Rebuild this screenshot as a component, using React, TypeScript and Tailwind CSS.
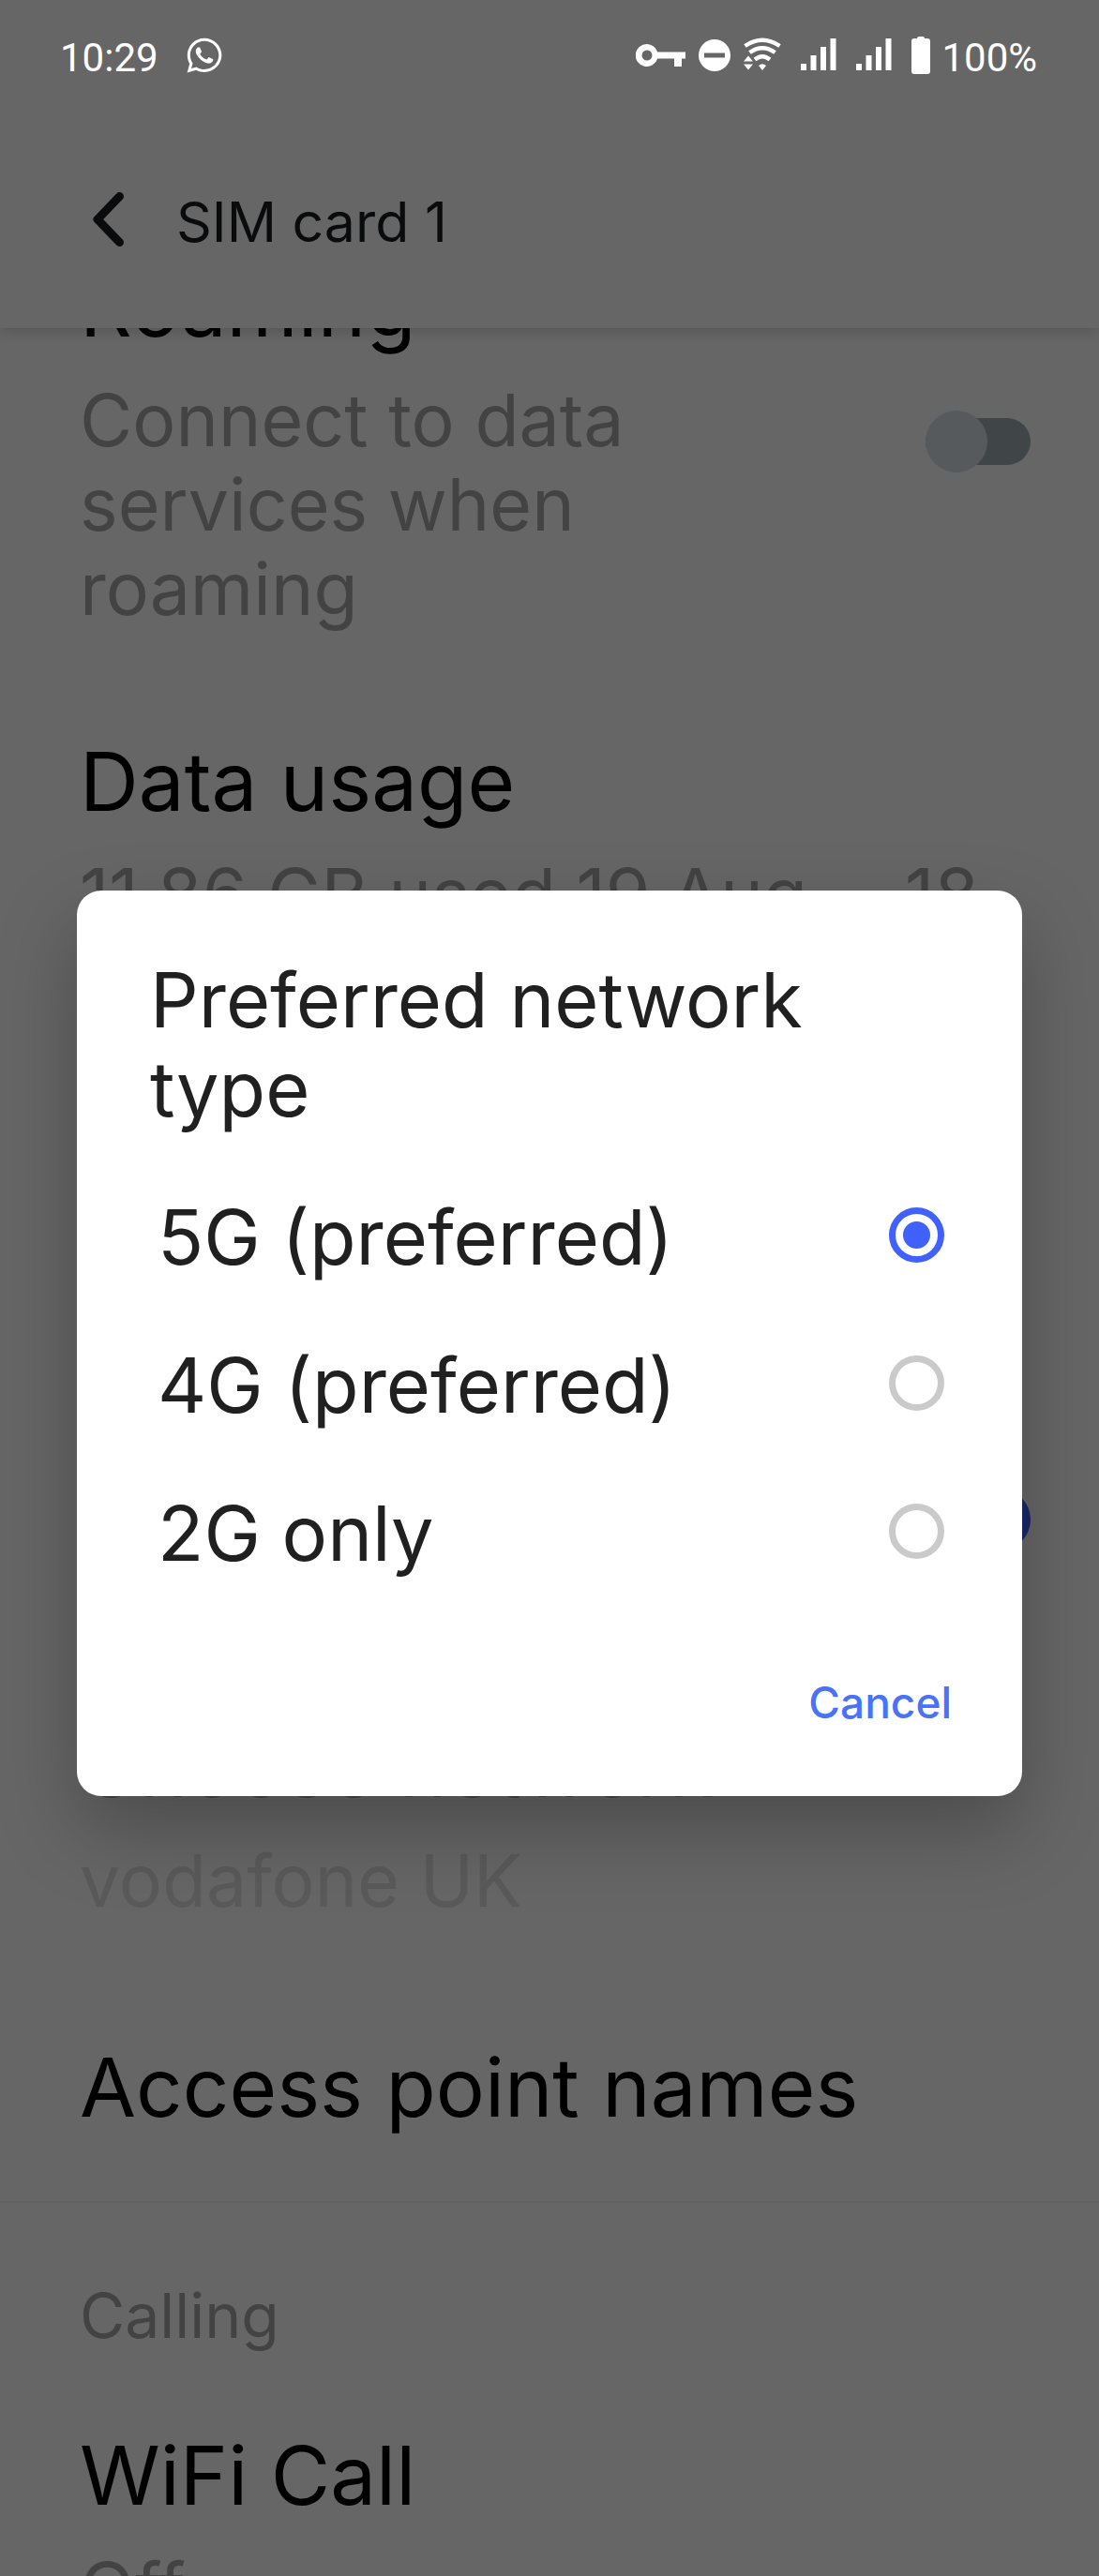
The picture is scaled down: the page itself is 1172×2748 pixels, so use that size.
import { useState } from "react";
import { FaWhatsapp } from "react-icons/fa";

const NETWORK_TYPES = ["5G (preferred)", "4G (preferred)", "2G only"];

function KeyIcon() {
  return (
    <svg width="53" height="40" viewBox="0 0 53 40" fill="currentColor" aria-hidden="true">
      <path
        fillRule="evenodd"
        d="M12 8a12 12 0 0 1 11.2 8.5H53v7h-4V32h-8v-8.500H23.200A12 12 0 1 1 12 8Zm0 6.500a5.500 5.500 0 1 0 0 11a5.500 5.500 0 1 0 0-11Z"
      />
    </svg>
  );
}

function DoNotDisturbIcon() {
  return (
    <svg width="34" height="40" viewBox="0 0 34 40" aria-hidden="true">
      <path fill="currentColor" fillRule="evenodd" d="M17 3a17 17 0 1 1 0 34a17 17 0 1 1 0-34ZM6 17.500v5h22v-5Z" />
    </svg>
  );
}

function WifiIcon() {
  return (
    <svg width="40" height="40" viewBox="0 0 40 40" fill="none" aria-hidden="true">
      <g stroke="currentColor" strokeWidth="4.500">
        <path d="M1.500 10Q20 -2.500 38.500 10" />
        <path d="M6.500 17Q20 7.500 33.500 17" />
        <path d="M12 24.500Q20 18 28 24.500" />
      </g>
      <path fill="currentColor" d="M16 31q4-3.500 8 0l-4 5ZM0 26.500l5-6 5 6ZM0 29.500h10l-5 6Z" />
    </svg>
  );
}

function SignalIcon() {
  return (
    <svg width="38" height="40" viewBox="0 0 38 40" fill="currentColor" aria-hidden="true">
      <path d="M0 29h6v7H0ZM10.500 20h6v16h-6ZM21 11h6v25h-6ZM31.500 2h6v34h-6Z" />
    </svg>
  );
}

function BatteryIcon() {
  return (
    <svg width="20" height="40" viewBox="0 0 20 40" fill="currentColor" aria-hidden="true">
      <path d="M8 0h4q2 0 2 2h3q3 0 3 3v32q0 3-3 3H3q-3 0-3-3V5q0-3 3-3h3q0-2 2-2Z" />
    </svg>
  );
}

function Switch({ label, checked, onChange }: { label: string; checked: boolean; onChange: (v: boolean) => void }) {
  return (
    <label className="flex shrink-0 items-center pb-2">
      <input
        type="checkbox"
        role="switch"
        aria-label={label}
        className="peer sr-only"
        checked={checked}
        onChange={(e) => onChange(e.target.checked)}
      />
      <span className="flex h-[50px] w-28 items-center rounded-full bg-[#a0adb2] peer-checked:justify-end peer-checked:bg-[#b3c0ff] peer-checked:[&>span]:bg-[#4161ff]">
        <span className="size-[66px] shrink-0 rounded-full bg-[#d8e2e8]" />
      </span>
    </label>
  );
}

function ItemText({ title, summary, disabled }: { title: string; summary?: string; disabled?: boolean }) {
  return (
    <div className="flex flex-1 flex-col gap-6">
      <p className={disabled ? "text-[87px] leading-[102px] text-[#b0b0b0]" : "text-[87px] leading-[102px] text-black"}>
        {title}
      </p>
      {summary && (
        <p className={disabled ? "text-[77px] leading-[90px] text-[#e0e0e0]" : "text-[77px] leading-[90px] text-[#a8a8a8]"}>
          {summary}
        </p>
      )}
    </div>
  );
}

export default function App() {
  const [networkType, setNetworkType] = useState("5G (preferred)");
  const [roaming, setRoaming] = useState(false);
  const [autoSelect, setAutoSelect] = useState(true);
  const [open, setOpen] = useState(true);

  return (
    <div className="relative h-screen overflow-hidden bg-white font-['Inter',sans-serif]">
      {/* Status bar stays above the dim layer */}
      <div className="absolute inset-x-0 top-0 z-30 flex h-[118px] items-center justify-between pr-[66px] pl-16 font-['Roboto',sans-serif] text-[42px] text-white">
        <div className="flex items-center gap-7">
          <time className="pt-1">10:29</time>
          <FaWhatsapp className="size-[42px]" />
        </div>
        <div className="flex items-center">
          <div className="mr-3 flex items-center gap-[21px]">
            <div className="flex items-center gap-[14px]">
              <KeyIcon />
              <DoNotDisturbIcon />
              <WifiIcon />
            </div>
            <SignalIcon />
            <SignalIcon />
            <BatteryIcon />
          </div>
          <span className="pt-1">100%</span>
        </div>
      </div>

      <header className="relative z-10 flex h-[350px] items-end bg-white px-[86px] pb-[73px] shadow-[0_2px_16px_rgba(0,0,0,0.2)]">
        <div className="flex items-center gap-[42px]">
          <button type="button" aria-label="Back" className="text-[#191c1e]">
            <svg width="60" height="80" viewBox="0 0 60 80" fill="none" stroke="currentColor" strokeWidth="9" strokeLinecap="round" strokeLinejoin="round">
              <path d="M41.500 12.500L18 37L41.500 61.500" />
            </svg>
          </button>
          <h1 className="text-[59px] leading-20 text-[#191c1e]">SIM card 1</h1>
        </div>
      </header>

      {/* Settings list, scrolled so the first title sits under the header */}
      <main className="-mt-32">
        <section className="flex items-center gap-28 pl-[85px] pr-[73px] py-[55px]">
          <ItemText title="Roaming" summary="Connect to data services when roaming" />
          <Switch label="Roaming" checked={roaming} onChange={setRoaming} />
        </section>
        <section className="pl-[85px] pr-[73px] py-[55px]">
          <ItemText title="Data usage" summary="11.86 GB used 19 Aug. – 18 Sept." />
        </section>
        <section className="pl-[85px] pr-[73px] py-[55px]">
          <ItemText title="Network type" summary={networkType} />
        </section>
        <section className="flex items-center gap-28 pl-[85px] pr-[73px] py-[53px]">
          <ItemText title="Select network automatically" />
          <Switch label="Select network automatically" checked={autoSelect} onChange={setAutoSelect} />
        </section>
        <section className="pl-[85px] pr-[73px] py-[55px]">
          <ItemText title="Choose network" summary="vodafone UK" disabled />
        </section>
        <section className="flex min-h-[244px] items-center border-b-2 border-[#f3f3f3] px-[85px]">
          <ItemText title="Access point names" />
        </section>
        <h2 className="px-[85px] pt-20 text-[66px] leading-20 text-[#a8a8a8]">Calling</h2>
        <section className="px-[85px] py-20">
          <ItemText title="WiFi Call" summary="Off" />
        </section>
      </main>

      {open && (
        <div className="absolute inset-0 z-20 flex items-center justify-center bg-black/60 px-[82px] pt-[118px]">
          <div
            role="dialog"
            aria-modal="true"
            aria-labelledby="network-dialog-title"
            className="flex-1 rounded-[26px] bg-white pt-[70px] pr-[75px] pb-[68px] pl-[78px] text-[#202020] shadow-[0_36px_84px_rgba(0,0,0,0.26)]"
          >
            <h2 id="network-dialog-title" className="pr-10 text-[81px] leading-[95px]">Preferred network type</h2>
            <div role="radiogroup" aria-labelledby="network-dialog-title" className="mt-7 px-2">
              {NETWORK_TYPES.map((type) => (
                <label key={type} className="flex h-[158px] items-center justify-between text-[81px]">
                  <span className="pt-2">{type}</span>
                  <input
                    type="radio"
                    name="network-type"
                    className="size-[59px] appearance-none rounded-full border-[7px] border-[#cacaca] checked:border-[#4161ff] checked:bg-[radial-gradient(circle,#4161ff_14px,transparent_15px)]"
                    checked={networkType === type}
                    onChange={() => setNetworkType(type)}
                  />
                </label>
              ))}
            </div>
            <div className="mt-[72px] flex justify-end">
              <button type="button" className="text-[46px] leading-16 font-medium text-[#4a72f8]" onClick={() => setOpen(false)}>
                Cancel
              </button>
            </div>
          </div>
        </div>
      )}
    </div>
  );
}
